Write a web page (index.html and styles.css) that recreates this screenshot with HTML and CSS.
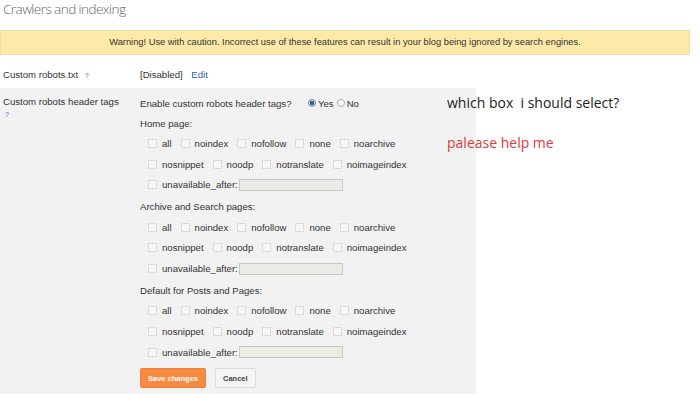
FILE: index.html
```html
<!DOCTYPE html>
<html lang="en">

<head>
  <meta charset="UTF-8">
  <title>Crawlers and indexing</title>
  <link rel="stylesheet" href="styles.css">
</head>

<body>
  <h1 class="title">Crawlers and indexing</h1>

  <div class="warning">Warning! Use with caution. Incorrect use of these features can result in your blog being ignored by search engines.</div>

  <!-- robots.txt -->
  <div class="row row-plain">
    <div class="label">Custom robots.txt <span class="help">?</span></div>
    <div class="value">[Disabled] <a class="edit" href="#">Edit</a></div>
  </div>

  <!-- header tags -->
  <div class="row row-panel">
    <div class="label">Custom robots header tags<br><span class="help">?</span></div>
    <div class="value form">
      <div class="enable">
        <span class="enable-text">Enable custom robots header tags?</span>
        <label class="radio"><span class="dot on"></span>Yes</label>
        <label class="radio"><span class="dot"></span>No</label>
      </div>

      <div class="group">
        <div class="group-title">Home page:</div>
        <div class="checks">
          <span class="chk"><i></i>all</span>
          <span class="chk"><i></i>noindex</span>
          <span class="chk"><i></i>nofollow</span>
          <span class="chk"><i></i>none</span>
          <span class="chk"><i></i>noarchive</span>
        </div>
        <div class="checks">
          <span class="chk"><i></i>nosnippet</span>
          <span class="chk"><i></i>noodp</span>
          <span class="chk"><i></i>notranslate</span>
          <span class="chk"><i></i>noimageindex</span>
        </div>
        <div class="checks">
          <span class="chk"><i></i>unavailable_after:</span>
          <span class="date"></span>
        </div>
      </div>

      <div class="group">
        <div class="group-title">Archive and Search pages:</div>
        <div class="checks">
          <span class="chk"><i></i>all</span>
          <span class="chk"><i></i>noindex</span>
          <span class="chk"><i></i>nofollow</span>
          <span class="chk"><i></i>none</span>
          <span class="chk"><i></i>noarchive</span>
        </div>
        <div class="checks">
          <span class="chk"><i></i>nosnippet</span>
          <span class="chk"><i></i>noodp</span>
          <span class="chk"><i></i>notranslate</span>
          <span class="chk"><i></i>noimageindex</span>
        </div>
        <div class="checks">
          <span class="chk"><i></i>unavailable_after:</span>
          <span class="date"></span>
        </div>
      </div>

      <div class="group">
        <div class="group-title">Default for Posts and Pages:</div>
        <div class="checks">
          <span class="chk"><i></i>all</span>
          <span class="chk"><i></i>noindex</span>
          <span class="chk"><i></i>nofollow</span>
          <span class="chk"><i></i>none</span>
          <span class="chk"><i></i>noarchive</span>
        </div>
        <div class="checks">
          <span class="chk"><i></i>nosnippet</span>
          <span class="chk"><i></i>noodp</span>
          <span class="chk"><i></i>notranslate</span>
          <span class="chk"><i></i>noimageindex</span>
        </div>
        <div class="checks">
          <span class="chk"><i></i>unavailable_after:</span>
          <span class="date"></span>
        </div>
      </div>

      <div class="buttons">
        <button class="btn btn-save">Save changes</button>
        <button class="btn btn-cancel">Cancel</button>
      </div>
    </div>

    <!-- 提问注释 -->
    <div class="note">
      <div class="note-q">which box&nbsp; i should select?</div>
      <div class="note-help">palease help me</div>
    </div>
  </div>
</body>

</html>
```

FILE: styles.css
```css
html,
body {
  margin: 0;
  background: #fff;
}

body {
  font-family: "Liberation Sans", Arial, sans-serif;
  font-size: 9.6px;
  color: #333;
  overflow: hidden;
}

.title {
  margin: 0;
  padding: 0 0 0 3px;
  height: 30px;
  font-family: "Open Sans", sans-serif;
  font-weight: 300;
  font-size: 13.5px;
  letter-spacing: -0.55px;
  line-height: 18px;
  color: #666;
}

.warning {
  width: 690px;
  height: 25px;
  box-sizing: border-box;
  background: #fde9a8;
  border: 1px solid #f1df9f;
  text-align: center;
  line-height: 23px;
  font-size: 9.3px;
  color: #333;
}

.row {
  display: flex;
}

.row-plain {
  height: 33px;
  align-items: center;
  padding-top: 6px;
  box-sizing: border-box;
}

.label {
  width: 137px;
  padding-left: 3px;
  flex: none;
}

.help {
  color: #3b6ad1;
  font-size: 7px;
  margin-left: 4px;
}

.row-panel .help {
  margin-left: 2px;
}

.edit {
  color: #2a5db0;
  text-decoration: none;
  margin-left: 6px;
}

.row-panel {
  position: relative;
  width: 476px;
  height: 306px;
  background: #f2f2f2;
  padding-top: 8px;
  box-sizing: border-box;
}

.row-panel .label {
  line-height: 12px;
}

.form {
  display: flex;
  flex-direction: column;
}

.enable {
  display: flex;
  align-items: center;
  height: 12px;
  margin-top: 1px;
}

.enable-text {
  width: 168px;
}

.radio {
  display: flex;
  align-items: center;
  margin-right: 3px;
}

.dot {
  width: 8px;
  height: 8px;
  border-radius: 50%;
  border: 1px solid #aaa;
  background: #fff;
  margin-right: 2px;
  box-sizing: border-box;
}

.dot.on {
  border-color: #6b7f95;
  background: radial-gradient(circle, #2f5e98 0 2px, #dfe6ee 2.5px);
}

.group-title {
  margin-top: 10.5px;
  height: 11px;
  line-height: 12px;
}

.enable + .group .group-title {
  margin-top: 8.5px;
}

.checks {
  display: flex;
  align-items: center;
  height: 12px;
  margin-top: 8.75px;
  padding-left: 8px;
}

.chk {
  display: flex;
  align-items: center;
  margin-right: 9px;
  color: #333;
}

.chk i {
  width: 9px;
  height: 9px;
  box-sizing: border-box;
  border: 1px solid #dcdcdc;
  background: #f7f7f7;
  margin-right: 5px;
}

.date {
  width: 104px;
  height: 12px;
  box-sizing: border-box;
  border: 1px solid #c8c8c8;
  background: #ebebe6;
  margin-left: -8px;
}

.buttons {
  display: flex;
  gap: 9px;
  margin-top: 10px;
}

.btn {
  height: 20px;
  box-sizing: border-box;
  font-family: "Liberation Sans", Arial, sans-serif;
  font-size: 7.5px;
  font-weight: bold;
  padding: 0 7px;
  border-radius: 2px;
}

.btn-save {
  background: #f68a3e;
  border: 1px solid #f0803a;
  color: #fff;
}

.btn-cancel {
  background: #f4f4f4;
  border: 1px solid #dcdcdc;
  color: #444;
}

.note {
  position: absolute;
  left: 447px;
  top: 5px;
  width: 240px;
  font-family: "Open Sans", sans-serif;
  font-size: 14px;
}

.note-q {
  color: #222;
}

.note-help {
  margin-top: 21px;
  color: #e03a3e;
}
```
